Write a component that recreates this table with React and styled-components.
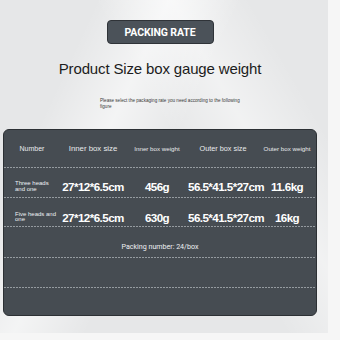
import React from "react";
import styled, { createGlobalStyle } from "styled-components";

const GlobalStyle = createGlobalStyle`
  html, body { margin: 0; padding: 0; background: #f6f6f6; }
  body { font-family: "Liberation Sans", Arial, sans-serif; }
`;

const Canvas = styled.div`
  width: 328px;
  height: 333px;
  box-sizing: border-box;
  padding: 20px 8px 0 0;
  display: flex;
  flex-direction: column;
  align-items: center;
  background:
    linear-gradient(115deg, rgba(255,255,255,0) 20%, rgba(255,255,255,0.55) 35%, rgba(255,255,255,0) 50%),
    linear-gradient(60deg, rgba(255,255,255,0) 55%, rgba(255,255,255,0.45) 70%, rgba(255,255,255,0) 85%),
    #e6e7e8;
`;

const Badge = styled.div`
  width: 107px;
  height: 24px;
  box-sizing: border-box;
  border: 1px solid #2f3338;
  border-radius: 4px;
  background: #4b5259;
  color: #fff;
  display: flex;
  align-items: center;
  justify-content: center;
  font-family: Roboto, "Liberation Sans", sans-serif;
  font-weight: 700;
  font-size: 10.5px;
  letter-spacing: -0.1px;
`;

const Title = styled.h1`
  margin: 16px 0 0;
  font-family: "Liberation Sans", Arial, sans-serif;
  font-weight: 400;
  font-size: 15px;
  line-height: 17px;
  letter-spacing: -0.15px;
  color: #1c1c1c;
`;

const Note = styled.p`
  align-self: flex-start;
  margin: 21px 0 0 100px;
  width: 140px;
  font-size: 4.6px;
  line-height: 6px;
  color: #3a3a3a;
`;

const Panel = styled.div`
  align-self: flex-start;
  margin: 19px 0 0 3px;
  width: 314px;
  height: 187px;
  box-sizing: border-box;
  border: 1px solid #2c3034;
  border-radius: 6px;
  background: #464c52;
  display: flex;
  flex-direction: column;
  overflow: hidden;
`;

const Row = styled.div`
  display: grid;
  grid-template-columns: 56px 66px 62px 70px 58px;
  align-items: center;
  box-sizing: border-box;
  height: ${(p) => p.$h}px;
  padding-top: ${(p) => p.$pt || 0}px;
  padding-bottom: 1px;
  background: ${(p) =>
    p.$last
      ? "none"
      : "linear-gradient(to right, #959ba0 60%, transparent 60%) bottom left / 3px 1px repeat-x"};
`;

const Full = styled.div`
  grid-column: 1 / -1;
  text-align: center;
  color: #eef0f2;
  font-family: Roboto, "Liberation Sans", sans-serif;
  font-size: 7.1px;
`;

const Head = styled.div`
  text-align: center;
  color: #e9ebed;
  font-family: "Liberation Sans", Arial, sans-serif;
  font-size: ${(p) => p.$size}px;
  white-space: nowrap;
`;

const Label = styled.div`
  justify-self: start;
  margin-left: 11px;
  width: 44px;
  color: #eef0f2;
  font-family: "Liberation Sans", Arial, sans-serif;
  font-size: 6px;
  line-height: 5.4px;
`;

const Value = styled.div`
  text-align: center;
  color: #ffffff;
  font-family: "Liberation Sans", Arial, sans-serif;
  font-weight: 700;
  font-size: 11.6px;
  letter-spacing: -0.55px;
  white-space: nowrap;
`;

const rows = [
  { label: "Three heads and one", inner: "27*12*6.5cm", iw: "456g", outer: "56.5*41.5*27cm", ow: "11.6kg", h: 30, pt: 9 },
  { label: "Five heads and one", inner: "27*12*6.5cm", iw: "630g", outer: "56.5*41.5*27cm", ow: "16kg", h: 29, pt: 11 },
];

export default function App() {
  return (
    <>
      <GlobalStyle />
      <Canvas>
        <Badge>PACKING RATE</Badge>
        <Title>Product Size box gauge weight</Title>
        <Note>
          Please select the packaging rate you need according to the following figure
        </Note>
        <Panel>
          <Row $h={38}>
            <Head $size={7}>Number</Head>
            <Head $size={7.8}>Inner box size</Head>
            <Head $size={6.2}>Inner box weight</Head>
            <Head $size={7.3}>Outer box size</Head>
            <Head $size={6.2}>Outer box weight</Head>
          </Row>
          {rows.map((r) => (
            <Row key={r.label} $h={r.h} $pt={r.pt}>
              <Label>{r.label}</Label>
              <Value>{r.inner}</Value>
              <Value>{r.iw}</Value>
              <Value>{r.outer}</Value>
              <Value>{r.ow}</Value>
            </Row>
          ))}
          <Row $h={32} $pt={9}>
            <Full>Packing number: 24/box</Full>
          </Row>
          <Row $h={30} />
          <Row $h={27} $last />
        </Panel>
      </Canvas>
    </>
  );
}
